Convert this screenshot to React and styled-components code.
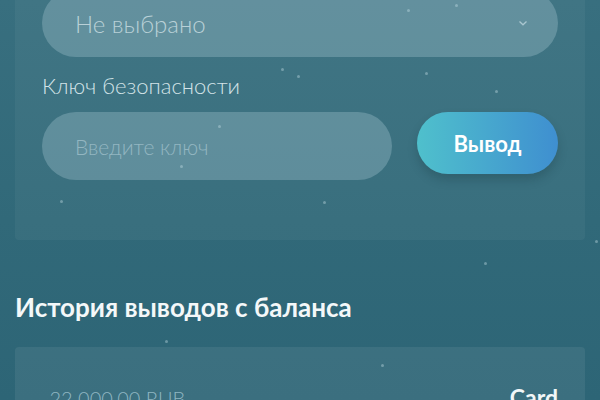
import styled, { createGlobalStyle } from "styled-components";

const GlobalStyle = createGlobalStyle`
  html, body {
    margin: 0;
    padding: 0;
    overflow: hidden;
  }
  body {
    font-family: "Lato", "Open Sans", sans-serif;
    background: #316979;
  }
`;

const Screen = styled.div`
  position: relative;
  width: 600px;
  height: 400px;
  overflow: hidden;
  background: linear-gradient(180deg, #386f7f 0%, #316979 55%, #2d6576 100%);
  padding: 0 15px;
  box-sizing: border-box;
`;

const Card = styled.div`
  margin-top: -30px;
  padding: 19px 27px 60px;
  background: rgba(255, 255, 255, 0.045);
  border-radius: 4px;
  display: flex;
  flex-direction: column;
`;

const Select = styled.div`
  height: 68px;
  border-radius: 34px;
  background: rgba(160, 195, 205, 0.36);
  display: flex;
  align-items: center;
  justify-content: space-between;
  padding: 0 30px 0 33px;
  box-sizing: border-box;
`;

const SelectValue = styled.span`
  font-size: 24px;
  font-weight: 300;
  color: #b9d0d7;
`;

const Chevron = styled.svg`
  width: 10px;
  height: 8px;
`;

const Label = styled.div`
  margin-top: 16px;
  font-size: 22px;
  line-height: 26px;
  font-weight: 300;
  color: #d3e3e8;
`;

const Row = styled.div`
  margin-top: 13px;
  display: flex;
  align-items: flex-start;
  gap: 25px;
`;

const Input = styled.div`
  flex: 1;
  height: 68px;
  border-radius: 34px;
  background: rgba(160, 195, 205, 0.36);
  display: flex;
  align-items: center;
  padding: 0 33px;
  box-sizing: border-box;
`;

const Placeholder = styled.span`
  font-size: 21px;
  font-weight: 300;
  color: #93b6c1;
`;

const Button = styled.button`
  width: 141px;
  height: 62px;
  border: none;
  border-radius: 31px;
  background: linear-gradient(90deg, #4fc0cc 0%, #3f8fd0 100%);
  box-shadow: 0 6px 10px rgba(20, 50, 60, 0.25);
  color: #ffffff;
  font-family: inherit;
  font-size: 22px;
  font-weight: 700;
`;

const Heading = styled.h2`
  margin: 52px 0 0;
  font-size: 26px;
  line-height: 30px;
  font-weight: 700;
  color: #f4f8f9;
`;

const HistoryCard = styled.div`
  margin-top: 25px;
  padding: 38px 27px 30px;
  background: rgba(255, 255, 255, 0.07);
  border-radius: 4px;
  display: flex;
  justify-content: space-between;
  align-items: baseline;
`;

const Amount = styled.span`
  font-size: 20px;
  line-height: 24px;
  font-weight: 300;
  color: #8fb6c2;
`;

const Method = styled.span`
  font-size: 23px;
  line-height: 24px;
  font-weight: 700;
  color: #f2f7f8;
`;

const Flake = styled.i`
  position: absolute;
  width: 3px;
  height: 3px;
  border-radius: 50%;
  background: rgba(200, 225, 232, 0.4);
`;

const flakes = [
  [281, 68], [297, 75], [425, 72], [455, 4], [495, 90],
  [218, 125], [180, 165], [60, 200], [323, 201], [595, 240],
  [484, 262], [165, 340], [381, 364], [407, 9],
];

export default function App() {
  return (
    <>
      <GlobalStyle />
      <Screen>
        <Card>
          <Select>
            <SelectValue>Не выбрано</SelectValue>
            <Chevron viewBox="0 0 10 8">
              <path
                d="M1.5 2.5 L5 5.8 L8.5 2.5"
                fill="none"
                stroke="#a9c6cf"
                strokeWidth="1.3"
              />
            </Chevron>
          </Select>
          <Label>Ключ безопасности</Label>
          <Row>
            <Input>
              <Placeholder>Введите ключ</Placeholder>
            </Input>
            <Button>Вывод</Button>
          </Row>
        </Card>
        <Heading>История выводов с баланса</Heading>
        <HistoryCard>
          <Amount>-22 000,00 RUB</Amount>
          <Method>Card</Method>
        </HistoryCard>
        {flakes.map(([x, y], i) => (
          <Flake key={i} style={{ left: x, top: y }} />
        ))}
      </Screen>
    </>
  );
}
